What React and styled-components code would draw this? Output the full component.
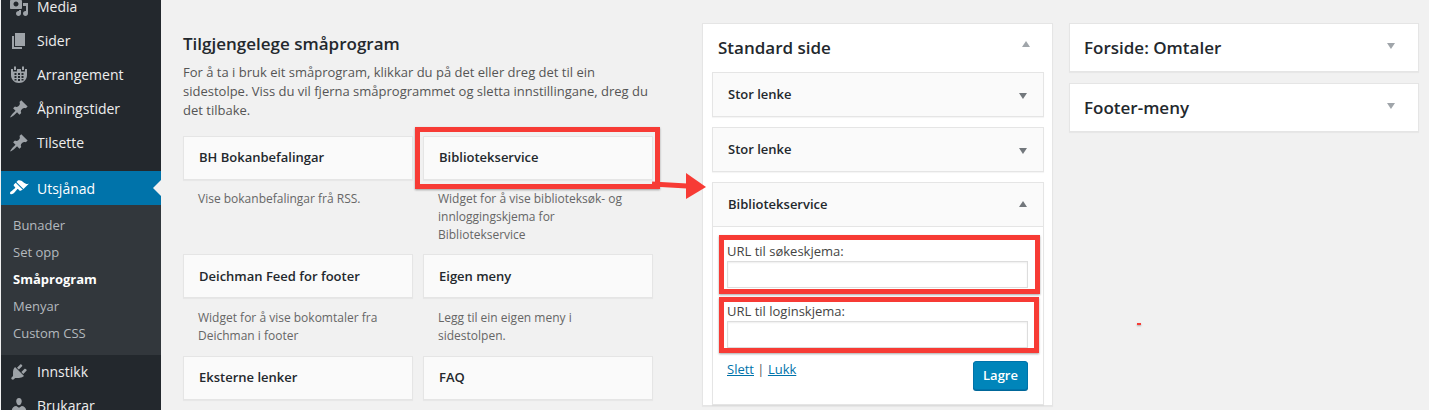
import React from 'react';
import styled, { createGlobalStyle } from 'styled-components';

const Global = createGlobalStyle`
  html, body { margin: 0; padding: 0; background: #f1f1f1; }
  body { font-family: "Open Sans", "Noto Sans", sans-serif; font-size: 13px; color: #444; }
  * { box-sizing: border-box; }
`;
const Page = styled.div`
  position: relative; display: flex; width: 1429px; height: 410px; overflow: hidden; background: #f1f1f1;
`;
const Menu = styled.nav`
  flex: none; width: 160px; height: 410px; margin-left: 1px; background: #23282d; overflow: hidden;
`;
const MenuList = styled.div`margin-top: -10px; display: flex; flex-direction: column;`;
const MenuItem = styled.div`
  position: relative; display: flex; align-items: center; flex: none; height: 34px;
  padding: 0 0 ${p => (p.$active ? 0 : 2)}px 36px; font-size: 14px; color: ${p => (p.$active ? '#fff' : '#eee')};
  background: ${p => (p.$active ? '#0073aa' : 'transparent')};
  margin-top: ${p => p.$gap || 0}px;
  ${p => p.$active && `&::after { content: ''; position: absolute; right: 0; top: 9px; border: 8px solid transparent; border-right-color: #f1f1f1; border-left: 0; }`}
`;
const MenuIcon = styled.svg`
  position: absolute; left: 8px; top: 7px; width: 20px; height: 20px; fill-rule: evenodd;
  fill: ${p => (p.$active ? '#fff' : '#9ea3a8')};
`;
const SubMenu = styled.div`
  flex: none; height: 150px; padding-top: 7px; background: #32373c;
`;
const SubItem = styled.div`
  height: 27px; line-height: 27px; padding-left: 12px; font-size: 13px;
  color: ${p => (p.$current ? '#fff' : '#b4b9be')}; font-weight: ${p => (p.$current ? 700 : 400)};
`;
const Content = styled.main`
  display: flex; align-items: flex-start; padding-left: 22px;
`;
const Available = styled.section`flex: none; width: 470px; padding-top: 32px;`;
const Heading = styled.h3`
  margin: 0; font-size: 17px; line-height: 24px; font-weight: 600; color: #23282d;
`;
const Intro = styled.p`margin: 7px 0 0; font-size: 13px; line-height: 19px; color: #555;`;
const WidgetGrid = styled.div`
  display: grid; grid-template-columns: 230px 230px; column-gap: 10px;
  grid-template-rows: 118.4px 101.6px 60px; margin-top: 15.6px;
`;
const Tile = styled.div`
  height: 44px; padding: 0 15px ${p => (p.$lift ? 2 : 0)}px; display: flex; align-items: center; background: #fafafa;
  border: 1px solid #e5e5e5; box-shadow: 0 1px 1px rgba(0,0,0,.04);
  font-size: 13px; font-weight: 600; color: #23282d;
`;
const TileText = styled.div`
  margin: ${p => (p.$lift ? 10 : 11)}px 30px 0 15px; font-size: 12px; line-height: 18px; color: #666;
`;
const Sidebars = styled.div`display: flex; align-items: flex-start; gap: 16px; margin-left: 49px; padding-top: 23px;`;
const Panel = styled.section`
  flex: none; width: ${p => p.$w}px; background: #fff; border: 1px solid #e5e5e5;
  box-shadow: 0 1px 1px rgba(0,0,0,.04);
  & + & { margin-top: 11px; }
`;
const Column = styled.div`flex: none; width: ${p => p.$w}px;`;
const PanelHead = styled.div`
  position: relative; display: flex; align-items: center; height: ${p => p.$h}px;
  padding: 0 0 ${p => p.$bottom || 0}px ${p => p.$pad}px;
  font-size: 17px; font-weight: 600; color: #23282d;
`;
const Caret = styled.svg`
  position: absolute; width: 20px; height: 20px; right: ${p => p.$right}px; top: ${p => p.$top}px;
  fill: ${p => p.$color};
`;
const Inner = styled.div`
  margin: ${p => p.$top || 0}px 8px 0 9px; background: #fff; border: 1px solid #e5e5e5;
  box-shadow: 0 1px 1px rgba(0,0,0,.04);
`;
const InnerHead = styled.div`
  position: relative; display: flex; align-items: center; height: ${p => p.$open ? 44 : 43}px; padding: 0 0 2px 15px; background: #fafafa;
  font-size: 13px; font-weight: 600; color: #23282d;
  border-bottom: ${p => (p.$open ? '1px solid #e5e5e5' : '0')};
`;
const InnerBody = styled.div`padding: 8px 0 14px 6px;`;
const Field = styled.div`
  width: ${p => p.$w}px; margin-top: ${p => p.$top || 0}px; padding: 0 7px ${p => p.$bottom}px 3px;
  border: 5px solid #f73b35; box-shadow: 0 1px 2px rgba(0,0,0,.35);
`;
const FieldLabel = styled.label`
  display: block; padding-top: ${p => p.$pad}px; font-size: 13px; line-height: 19px; color: #444;
`;
const Input = styled.input`
  display: block; width: ${p => p.$w}px; height: 27px; padding: 0; background: #fff; border: 1px solid #ddd;
  box-shadow: inset 0 1px 2px rgba(0,0,0,.07); outline: 0;
`;
const Actions = styled.div`
  display: flex; justify-content: space-between; align-items: flex-start; margin-top: 8px; padding: 0 15px 0 8px;
  font-size: 13px; line-height: 16px;
`;
const Links = styled.div`color: #555;`;
const Link = styled.a`color: #0073aa; text-decoration: underline;`;
const SaveButton = styled.button`
  width: 55px; height: 29px; padding: 0 0 2px; background: #0085ba; border: 1px solid #0073aa; border-radius: 3px;
  box-shadow: 0 1px 0 #006799; color: #fff; font: 600 13px "Open Sans", sans-serif;
`;
const Callout = styled.div`
  position: absolute; left: 415px; top: 127px; width: 245px; height: 62px; border: 5px solid #f73b35;
  box-shadow: 0 1px 2px rgba(0,0,0,.35);
`;
const Arrow = styled.svg`position: absolute; left: 645px; top: 168px; width: 65px; height: 36px;`;
const Speck = styled.div`
  position: absolute; left: 1137px; top: 323px; width: 4px; height: 2px; background: #f73b35;
  box-shadow: 0 1px 2px rgba(0,0,0,.3);
`;

const Icons = {
  media: 'M13 11V4c0-.55-.45-1-1-1h-1.67L9 1H5L3.67 3H2c-.55 0-1 .45-1 1v7c0 .55.45 1 1 1h10c.55 0 1-.45 1-1zM7 4.500c1.380 0 2.500 1.120 2.500 2.500S8.380 9.500 7 9.500 4.500 8.380 4.500 7 5.620 4.500 7 4.500zM14 6h5v10.500c0 1.380-1.120 2.500-2.500 2.500S14 17.880 14 16.500s1.120-2.500 2.500-2.500c.17 0 .34.02.5.05V9h-3V6zm-4 8.050V13h2v3.500c0 1.380-1.120 2.500-2.500 2.500S7 17.880 7 16.500 8.120 14 9.500 14c.17 0 .34.02.5.05z',
  page: 'M6 15V2h10v13H6zm-1 1h8v2H3V5h2v11z',
  calendar: 'M5 1.500h2V5H5zM13 1.500h2V5h-2zM2 4h2v2.500h4V4h4v2.500h4V4h2v6c0 4.500-3.500 8-8 8s-8-3.500-8-8zM5.500 8v2h2V8zM9 8v2h2V8zM12.500 8v2h2V8zM5.500 11v2h2v-2zM9 11v2h2v-2zM12.500 11v2h2v-2zM5.500 14v1.500h2V14zM9 14v2h2v-2zM12.500 14v1.500h2V14z',
  pin: 'M10.440 3.020l1.820-1.820 6.360 6.350-1.830 1.820c-1.050-.68-2.480-.57-3.410.36l-.75.75c-.92.93-1.040 2.350-.35 3.410l-1.830 1.820-2.410-2.410-2.800 2.790c-.42.42-3.380 2.710-3.800 2.290s1.860-3.390 2.280-3.810l2.790-2.790L4.100 9.360l1.830-1.820c1.050.69 2.480.57 3.400-.36l.75-.75c.93-.92 1.050-2.350.36-3.410z',
  brush: 'M14.480 11.060L7.410 3.990l1.500-1.500c.5-.56 2.300-.47 3.510.32 1.210.8 1.430 1.280 2.910 2.100 1.180.64 2.450 1.260 4.450.85zm-.71.71L6.700 4.700 4.930 6.470c-.39.39-.39 1.020 0 1.410l1.060 1.060c.39.39.39 1.030 0 1.420-.6.6-1.430 1.110-2.210 1.690-.35.26-.7.53-1.010.84C1.430 13.230.4 14.960 1.400 15.970c.99 1 2.730-.03 4.070-1.360.31-.31.58-.66.85-1.020.57-.78 1.080-1.610 1.690-2.210.39-.39 1.020-.39 1.410 0l1.060 1.060c.39.39 1.020.39 1.410 0z',
  plug: 'M13.110 4.360L9.870 7.600 8 5.730l3.240-3.240c.35-.34 1.050-.2 1.560.32.52.51.66 1.210.31 1.550zm-8 1.770l.91-1.120 9.010 9.010-1.190.84c-.71.71-2.630 1.160-3.820 1.160H6.140L4.900 17.260c-.59.59-1.540.59-2.120 0-.59-.58-.59-1.530 0-2.120l1.240-1.240v-3.880c0-1.130.4-3.190 1.090-3.890zm7.260 3.970l3.240-3.240c.34-.35 1.040-.21 1.550.31.52.51.66 1.210.31 1.550l-3.240 3.250z',
  users: 'M10 9.250c-2.270 0-2.730-3.440-2.730-3.440C7 4.020 7.820 2 9.970 2c2.160 0 2.980 2.020 2.710 3.810 0 0-.41 3.440-2.680 3.440zm0 2.570L12.720 10c2.390 0 4.520 2.330 4.520 4.530v2.490s-3.650 1.130-7.240 1.130c-3.650 0-7.240-1.130-7.240-1.130v-2.490c0-2.250 1.940-4.480 4.470-4.480z',
};
const DOWN = 'M15 8l-4.030 6L7 8h8z';
const UP = 'M7 13l4.030-6L15 13H7z';

const Item = ({ icon, active, gap, children }) => (
  <MenuItem $active={active} $gap={gap}>
    <MenuIcon $active={active} viewBox="0 0 20 20"><path d={Icons[icon]} /></MenuIcon>
    {children}
  </MenuItem>
);

const Widget = ({ title, lift, children }) => (
  <div>
    <Tile $lift={lift}>{title}</Tile>
    {children && <TileText $lift={lift}>{children}</TileText>}
  </div>
);

const Head = ({ title }) => (
  <PanelHead $h={47} $pad={14}>{title}<Caret $right={18} $top={11} $color="#a0a5aa" viewBox="0 0 20 20"><path d={DOWN} /></Caret></PanelHead>
);

export default function App() {
  return (
    <Page>
      <Global />
      <Menu>
        <MenuList>
          <Item icon="media">Media</Item>
          <Item icon="page">Sider</Item>
          <Item icon="calendar">Arrangement</Item>
          <Item icon="pin">Åpningstider</Item>
          <Item icon="pin">Tilsette</Item>
          <Item icon="brush" active gap={11}>Utsjånad</Item>
          <SubMenu>
            <SubItem>Bunader</SubItem>
            <SubItem>Set opp</SubItem>
            <SubItem $current>Småprogram</SubItem>
            <SubItem>Menyar</SubItem>
            <SubItem>Custom CSS</SubItem>
          </SubMenu>
          <Item icon="plug">Innstikk</Item>
          <Item icon="users">Brukarar</Item>
        </MenuList>
      </Menu>
      <Content>
        <Available>
          <Heading>Tilgjengelege småprogram</Heading>
          <Intro>For å ta i bruk eit småprogram, klikkar du på det eller dreg det til ein sidestolpe. Viss du vil fjerna småprogrammet og sletta innstillingane, dreg du det tilbake.</Intro>
          <WidgetGrid>
            <Widget lift title="BH Bokanbefalingar">Vise bokanbefalingar frå RSS.</Widget>
            <Widget lift title="Bibliotekservice">Widget for å vise biblioteksøk- og innloggingskjema for Bibliotekservice</Widget>
            <Widget title="Deichman Feed for footer">Widget for å vise bokomtaler fra Deichman i footer</Widget>
            <Widget title="Eigen meny">Legg til ein eigen meny i sidestolpen.</Widget>
            <Widget lift title="Eksterne lenker" />
            <Widget lift title="FAQ" />
          </WidgetGrid>
        </Available>
        <Sidebars>
          <Panel $w={351}>
            <PanelHead $h={48} $pad={15} $bottom={2}>
              Standard side
              <Caret $right={17} $top={10} $color="#a0a5aa" viewBox="0 0 20 20"><path d={UP} /></Caret>
            </PanelHead>
            <Inner>
              <InnerHead>Stor lenke<Caret $right={11} $top={12} $color="#72777c" viewBox="0 0 20 20"><path d={DOWN} /></Caret></InnerHead>
            </Inner>
            <Inner $top={10}>
              <InnerHead>Stor lenke<Caret $right={11} $top={12} $color="#72777c" viewBox="0 0 20 20"><path d={DOWN} /></Caret></InnerHead>
            </Inner>
            <Inner $top={10}>
              <InnerHead $open>Bibliotekservice<Caret $right={11} $top={11} $color="#72777c" viewBox="0 0 20 20"><path d={UP} /></Caret></InnerHead>
              <InnerBody>
                <Field $w={321} $bottom={1}>
                  <FieldLabel $pad={2}>URL til søkeskjema:</FieldLabel>
                  <Input $w={301} />
                </Field>
                <Field $w={320} $top={3} $bottom={0}>
                  <FieldLabel $pad={0}>URL til loginskjema:</FieldLabel>
                  <Input $w={301} />
                </Field>
                <Actions>
                  <Links><Link>Slett</Link> | <Link>Lukk</Link></Links>
                  <SaveButton>Lagre</SaveButton>
                </Actions>
              </InnerBody>
            </Inner>
          </Panel>
          <Column $w={350}>
            <Panel $w={350}><Head title="Forside: Omtaler" /></Panel>
            <Panel $w={350}><Head title="Footer-meny" /></Panel>
          </Column>
        </Sidebars>
      </Content>
      <Callout />
      <Arrow viewBox="0 0 65 36">
        <path d="M7 16 L42 18" stroke="#f73b35" strokeWidth="5" fill="none" />
        <path d="M41 5 L61 19 L41 31 Z" fill="#f73b35" />
      </Arrow>
      <Speck />
    </Page>
  );
}
